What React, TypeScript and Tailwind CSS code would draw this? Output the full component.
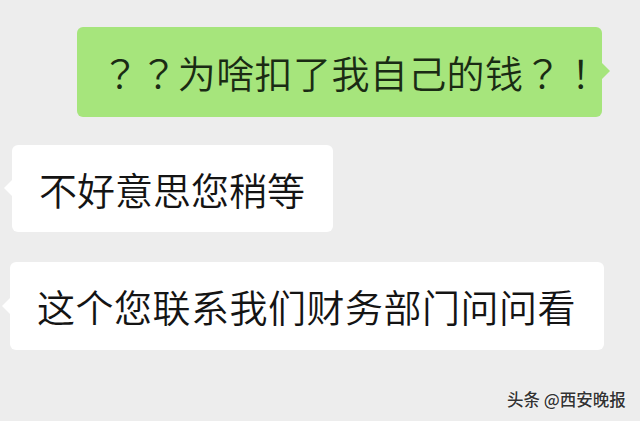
import React from "react";

const font = { fontFamily: '"Noto Sans CJK SC", "Noto Sans", sans-serif' };
const tc = { fontFamily: '"Noto Sans CJK TC", "Noto Sans CJK SC", sans-serif' };

export default function App() {
  return (
    <div
      className="relative w-[640px] h-[421px] overflow-hidden bg-[#ededed] flex flex-col"
      style={font}
    >
      <div className="flex justify-end pt-[27px] pr-[38px]">
        <div className="relative bg-[#a6e57c] rounded-[6px] h-[90px] w-[525px] flex items-center pl-[24px] text-[38px] leading-none font-[350] text-[#1a2b14] tracking-[0.4px]">
          <span style={tc}>？？</span>为啥扣了我自己的钱<span style={tc}>？！</span>
          <div className="absolute right-[-8px] top-[36px] w-0 h-0 border-y-[8px] border-y-transparent border-l-[8px] border-l-[#a6e57c]" />
        </div>
      </div>
      <div className="flex pl-[12px] pt-[28px]">
        <div className="relative bg-white rounded-[6px] h-[87px] w-[321px] flex items-center pl-[27px] text-[38px] leading-none font-[350] text-[#141414]">
          不好意思您稍等
          <div className="absolute left-[-8px] top-[35px] w-0 h-0 border-y-[8px] border-y-transparent border-r-[8px] border-r-white" />
        </div>
      </div>
      <div className="flex pl-[10px] pt-[30px]">
        <div className="relative bg-white rounded-[6px] h-[88px] w-[594px] flex items-center pl-[27px] text-[38px] leading-none font-[350] text-[#141414] tracking-[0.5px]">
          这个您联系我们财务部门问问看
          <div className="absolute left-[-8px] top-[36px] w-0 h-0 border-y-[8px] border-y-transparent border-r-[8px] border-r-white" />
        </div>
      </div>
      <div className="absolute left-[507px] top-[391px] text-[16.5px] leading-none font-medium text-[#333] [text-shadow:0_0_2px_#fff,0_0_1px_#fff]">
        头条 @西安晚报
      </div>
    </div>
  );
}
